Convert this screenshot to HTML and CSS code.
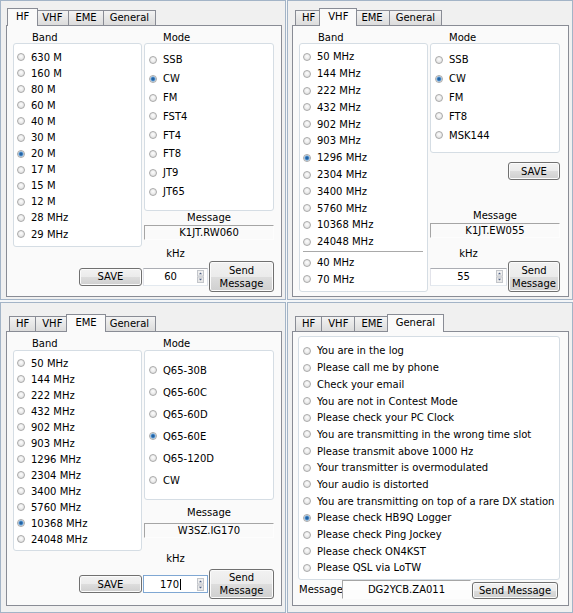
FILE: index.html
```html
<!DOCTYPE html>
<html lang="en">
<head>
    <meta charset="UTF-8">
    <title>Fast Messages</title>
    <link rel="stylesheet" href="styles.css">
</head>
<body>
    <div class="window">

        <!-- HF -->
        <section class="panel hf">
            <div class="tabs">
                <span class="tab active">HF</span><span class="tab">VHF</span><span class="tab">EME</span><span class="tab">General</span>
            </div>
            <div class="pane bandpane">
                <div class="head">Band</div>
                <div class="head">Mode</div>
                <div class="group band">
                    <div class="opt"><i class="radio"></i>630 M</div>
                    <div class="opt"><i class="radio"></i>160 M</div>
                    <div class="opt"><i class="radio"></i>80 M</div>
                    <div class="opt"><i class="radio"></i>60 M</div>
                    <div class="opt"><i class="radio"></i>40 M</div>
                    <div class="opt"><i class="radio"></i>30 M</div>
                    <div class="opt"><i class="radio on"></i>20 M</div>
                    <div class="opt"><i class="radio"></i>17 M</div>
                    <div class="opt"><i class="radio"></i>15 M</div>
                    <div class="opt"><i class="radio"></i>12 M</div>
                    <div class="opt"><i class="radio"></i>28 MHz</div>
                    <div class="opt"><i class="radio"></i>29 MHz</div>
                </div>
                <div class="side">
                    <div class="group mode">
                        <div class="opt"><i class="radio"></i>SSB</div>
                        <div class="opt"><i class="radio on"></i>CW</div>
                        <div class="opt"><i class="radio"></i>FM</div>
                        <div class="opt"><i class="radio"></i>FST4</div>
                        <div class="opt"><i class="radio"></i>FT4</div>
                        <div class="opt"><i class="radio"></i>FT8</div>
                        <div class="opt"><i class="radio"></i>JT9</div>
                        <div class="opt"><i class="radio"></i>JT65</div>
                    </div>
                    <div class="caption">Message</div>
                    <div class="field">K1JT.RW060</div>
                </div>
                <div class="khz-row"><span class="khz">kHz</span></div>
                <div class="actions">
                    <button class="btn save">SAVE</button>
                    <div class="spin">
                        <span class="value">60</span>
                        <svg class="arrows" width="7" height="13" viewBox="0 0 7 13">
                            <rect x="0.5" y="0.5" width="6" height="5.5" fill="#efefef" stroke="#c3c6cb"/>
                            <rect x="0.5" y="7" width="6" height="5.5" fill="#e8e8e8" stroke="#c3c6cb"/>
                            <path d="M2 4.2h3L3.5 2.4z" fill="#4b5e83"/>
                            <path d="M2 8.8h3L3.5 10.6z" fill="#4b5e83"/>
                        </svg>
                    </div>
                    <button class="btn send">Send<br>Message</button>
                </div>
            </div>
        </section>

        <!-- VHF -->
        <section class="panel right vhf">
            <div class="tabs">
                <span class="tab">HF</span><span class="tab active">VHF</span><span class="tab">EME</span><span class="tab">General</span>
            </div>
            <div class="pane bandpane">
                <div class="head">Band</div>
                <div class="head">Mode</div>
                <div class="group band">
                    <div class="opt"><i class="radio"></i>50 MHz</div>
                    <div class="opt"><i class="radio"></i>144 MHz</div>
                    <div class="opt"><i class="radio"></i>222 MHz</div>
                    <div class="opt"><i class="radio"></i>432 MHz</div>
                    <div class="opt"><i class="radio"></i>902 MHz</div>
                    <div class="opt"><i class="radio"></i>903 MHz</div>
                    <div class="opt"><i class="radio on"></i>1296 MHz</div>
                    <div class="opt"><i class="radio"></i>2304 MHz</div>
                    <div class="opt"><i class="radio"></i>3400 MHz</div>
                    <div class="opt"><i class="radio"></i>5760 MHz</div>
                    <div class="opt"><i class="radio"></i>10368 MHz</div>
                    <div class="opt"><i class="radio"></i>24048 MHz</div>
                    <div class="sep"></div>
                    <div class="opt"><i class="radio"></i>40 MHz</div>
                    <div class="opt"><i class="radio"></i>70 MHz</div>
                </div>
                <div class="side">
                    <div class="group mode">
                        <div class="opt"><i class="radio"></i>SSB</div>
                        <div class="opt"><i class="radio on"></i>CW</div>
                        <div class="opt"><i class="radio"></i>FM</div>
                        <div class="opt"><i class="radio"></i>FT8</div>
                        <div class="opt"><i class="radio"></i>MSK144</div>
                    </div>
                    <button class="btn save">SAVE</button>
                    <div class="caption">Message</div>
                    <div class="field">K1JT.EW055</div>
                    <div class="khz-row"><span class="khz">kHz</span></div>
                    <div class="actions">
                        <div class="spin">
                            <span class="value">55</span>
                            <svg class="arrows" width="7" height="13" viewBox="0 0 7 13">
                                <rect x="0.5" y="0.5" width="6" height="5.5" fill="#efefef" stroke="#c3c6cb"/>
                                <rect x="0.5" y="7" width="6" height="5.5" fill="#e8e8e8" stroke="#c3c6cb"/>
                                <path d="M2 4.2h3L3.5 2.4z" fill="#4b5e83"/>
                                <path d="M2 8.8h3L3.5 10.6z" fill="#4b5e83"/>
                            </svg>
                        </div>
                        <button class="btn send">Send<br>Message</button>
                    </div>
                </div>
            </div>
        </section>

        <!-- EME -->
        <section class="panel lower eme">
            <div class="tabs">
                <span class="tab">HF</span><span class="tab">VHF</span><span class="tab active">EME</span><span class="tab">General</span>
            </div>
            <div class="pane bandpane">
                <div class="head">Band</div>
                <div class="head">Mode</div>
                <div class="group band">
                    <div class="opt"><i class="radio"></i>50 MHz</div>
                    <div class="opt"><i class="radio"></i>144 MHz</div>
                    <div class="opt"><i class="radio"></i>222 MHz</div>
                    <div class="opt"><i class="radio"></i>432 MHz</div>
                    <div class="opt"><i class="radio"></i>902 MHz</div>
                    <div class="opt"><i class="radio"></i>903 MHz</div>
                    <div class="opt"><i class="radio"></i>1296 MHz</div>
                    <div class="opt"><i class="radio"></i>2304 MHz</div>
                    <div class="opt"><i class="radio"></i>3400 MHz</div>
                    <div class="opt"><i class="radio"></i>5760 MHz</div>
                    <div class="opt"><i class="radio on"></i>10368 MHz</div>
                    <div class="opt"><i class="radio"></i>24048 MHz</div>
                </div>
                <div class="side">
                    <div class="group mode">
                        <div class="opt"><i class="radio"></i>Q65-30B</div>
                        <div class="opt"><i class="radio"></i>Q65-60C</div>
                        <div class="opt"><i class="radio"></i>Q65-60D</div>
                        <div class="opt"><i class="radio on"></i>Q65-60E</div>
                        <div class="opt"><i class="radio"></i>Q65-120D</div>
                        <div class="opt"><i class="radio"></i>CW</div>
                    </div>
                    <div class="caption">Message</div>
                    <div class="field">W3SZ.IG170</div>
                </div>
                <div class="khz-row"><span class="khz">kHz</span></div>
                <div class="actions">
                    <button class="btn save">SAVE</button>
                    <div class="spin focus">
                        <span class="value">170<span class="caret"></span></span>
                        <svg class="arrows" width="7" height="13" viewBox="0 0 7 13">
                            <rect x="0.5" y="0.5" width="6" height="5.5" fill="#efefef" stroke="#c3c6cb"/>
                            <rect x="0.5" y="7" width="6" height="5.5" fill="#e8e8e8" stroke="#c3c6cb"/>
                            <path d="M2 4.2h3L3.5 2.4z" fill="#4b5e83"/>
                            <path d="M2 8.8h3L3.5 10.6z" fill="#4b5e83"/>
                        </svg>
                    </div>
                    <button class="btn send">Send<br>Message</button>
                </div>
            </div>
        </section>

        <!-- General -->
        <section class="panel right lower general">
            <div class="tabs">
                <span class="tab">HF</span><span class="tab">VHF</span><span class="tab">EME</span><span class="tab active">General</span>
            </div>
            <div class="pane genpane">
                <div class="group list">
                    <div class="opt"><i class="radio"></i>You are in the log</div>
                    <div class="opt"><i class="radio"></i>Please call me by phone</div>
                    <div class="opt"><i class="radio"></i>Check your email</div>
                    <div class="opt"><i class="radio"></i>You are not in Contest Mode</div>
                    <div class="opt"><i class="radio"></i>Please check your PC Clock</div>
                    <div class="opt"><i class="radio"></i>You are transmitting in the wrong time slot</div>
                    <div class="opt"><i class="radio"></i>Please transmit above 1000 Hz</div>
                    <div class="opt"><i class="radio"></i>Your transmitter is overmodulated</div>
                    <div class="opt"><i class="radio"></i>Your audio is distorted</div>
                    <div class="opt"><i class="radio"></i>You are transmitting on top of a rare DX station</div>
                    <div class="opt"><i class="radio on"></i>Please check HB9Q Logger</div>
                    <div class="opt"><i class="radio"></i>Please check Ping Jockey</div>
                    <div class="opt"><i class="radio"></i>Please check ON4KST</div>
                    <div class="opt"><i class="radio"></i>Please QSL via LoTW</div>
                </div>
                <div class="msgrow">
                    <span class="label">Message</span>
                    <div class="field">DG2YCB.ZA011</div>
                    <button class="btn send">Send Message</button>
                </div>
            </div>
        </section>

    </div>
</body>
</html>
```

FILE: styles.css
```css
* {
    box-sizing: border-box;
}

body {
    margin: 0;
    font-family: "DejaVu Sans", "Liberation Sans", sans-serif;
    font-size: 10px;
    color: #000;
    background: #f4f6f8;
}

.window {
    display: grid;
    grid-template-columns: 286px 286px;
    grid-template-rows: 300px 311px;
    column-gap: 1px;
    row-gap: 2px;
    width: 573px;
    height: 613px;
    background: #f4f6f8;
}

/* window frames */
.panel {
    display: flex;
    flex-direction: column;
    border: 1px solid #a3b4c7;
    background: #f0f0f0;
    padding: 7px 3px 2px 5px;
}

.panel.right {
    padding-left: 4px;
}

.panel.lower {
    padding-top: 11px;
    padding-bottom: 6px;
}

/* tab bar */
.tabs {
    display: flex;
    align-items: flex-end;
    height: 18px;
    margin: 0 0 -1px 3px;
    position: relative;
    z-index: 2;
}

.tab {
    height: 15px;
    margin-bottom: 1px;
    padding: 0 6px;
    border: 1px solid #898c95;
    border-bottom: none;
    background: linear-gradient(#f3f3f3, #e7e7e7 50%, #dcdcdc);
    line-height: 14px;
    white-space: nowrap;
}

.tab + .tab {
    margin-left: -1px;
}

.tab.active {
    height: 18px;
    margin: 0 -2px 0 -2px;
    padding: 1px 8px 0;
    background: #fafafa;
    position: relative;
    z-index: 1;
}

.tab + .tab.active {
    margin-left: -3px;
}

.pane {
    flex: 1;
    border: 1px solid #898c95;
    background: #fafafa;
    position: relative;
    z-index: 1;
}

/* band / mode pages */
.bandpane {
    display: grid;
    grid-template-columns: 129px 130px;
    column-gap: 2px;
    padding-left: 6px;
    align-content: start;
}

.head {
    height: 17px;
    line-height: 23px;
    padding-left: 19px;
}

.lower .head {
    height: 18px;
}

.group {
    background: #fff;
    border: 1px solid #d5dde4;
    border-radius: 3px;
}

.opt {
    display: flex;
    align-items: center;
    white-space: nowrap;
}

.radio {
    flex: none;
    width: 8px;
    height: 8px;
    margin-right: 6px;
    border: 1px solid #a9a9a9;
    border-radius: 50%;
    background: radial-gradient(circle at 50% 40%, #fdfdfd 0, #e4e4e4 70%, #d2d2d2 100%);
}

.radio.on {
    background: radial-gradient(circle, #174f88 0, #2f74b8 1.4px, #8dbbe6 2.4px, #e6e6e6 3px);
}

.band {
    padding-left: 3px;
}

.mode,
.list {
    padding-left: 4px;
}

.side {
    display: flex;
    flex-direction: column;
}

.caption {
    height: 14px;
    line-height: 14px;
    text-align: center;
}

.field {
    height: 15px;
    line-height: 13px;
    text-align: center;
    border: 1px solid;
    border-color: #a5a5a5 #fdfdfd #fdfdfd #a5a5a5;
}

.khz-row {
    grid-column: 1 / -1;
    display: flex;
    justify-content: flex-end;
    height: 14px;
    line-height: 14px;
}

.khz {
    width: 65px;
    margin-right: 66px;
    text-align: center;
}

.lower .khz-row {
    height: 18px;
    line-height: 16px;
}

.actions {
    grid-column: 1 / -1;
    display: flex;
    justify-content: flex-end;
    align-items: center;
    gap: 1px;
    height: 31px;
}

.lower .actions {
    height: 30px;
}

/* push buttons */
.btn {
    font: inherit;
    color: #000;
    padding: 0;
    border: 1px solid #707070;
    border-radius: 3px;
    background: linear-gradient(#f2f2f2, #ebebeb 50%, #dddddd 51%, #cfcfcf);
    box-shadow: inset 0 0 0 1px #fbfbfb;
    line-height: 13px;
}

.save {
    width: 63px;
    height: 18px;
}

.send {
    width: 65px;
    height: 31px;
}

.lower .send {
    height: 30px;
}

/* spin box */
.spin {
    display: flex;
    align-items: center;
    width: 65px;
    height: 18px;
    background: #fff;
    border: 1px solid;
    border-color: #abadb3 #dbdfe6 #e3e9ef #e2e3ea;
}

.spin.focus {
    border-color: #7fa7d3;
}

.spin .value {
    flex: 1;
    text-align: center;
}

.arrows {
    flex: none;
    margin-right: 3px;
}

.caret {
    display: inline-block;
    width: 1px;
    height: 11px;
    margin-left: 1px;
    background: #000;
    vertical-align: -2px;
}

/* per page sizes */
.hf .band {
    height: 204px;
    padding-top: 5px;
}

.hf .band .opt {
    height: 16.1px;
}

.hf .mode {
    height: 168px;
    padding-top: 6.6px;
}

.hf .mode .opt {
    height: 18.8px;
}

.vhf .band {
    height: 249px;
    padding-top: 4.6px;
}

.vhf .band .opt {
    height: 16.8px;
}

.sep {
    height: 1px;
    margin: 1px 4px 2px 0;
    background: #a9a9a9;
}

.vhf .mode {
    height: 110px;
    padding-top: 6.6px;
}

.vhf .mode .opt {
    height: 18.8px;
}

.vhf .save {
    align-self: flex-end;
    width: 52px;
    margin-top: 9px;
}

.vhf .caption {
    margin-top: 29px;
}

.vhf .khz-row {
    justify-content: flex-start;
    margin-top: 9px;
}

.vhf .khz {
    width: 77px;
    margin-right: 0;
}

.vhf .actions {
    justify-content: flex-start;
}

.vhf .spin {
    width: 77px;
}

.vhf .send {
    width: 52px;
}

.eme .band {
    height: 201px;
    padding-top: 4px;
}

.eme .band .opt {
    height: 16px;
}

.eme .mode {
    height: 150px;
    padding-top: 8px;
}

.eme .mode .opt {
    height: 22px;
}

.eme .caption {
    margin-top: 6px;
}

.eme .field {
    margin-top: 3px;
}

/* general page */
.genpane {
    display: flex;
    flex-direction: column;
    padding: 4px 8px 6px 5px;
}

.list {
    height: 244px;
    padding-top: 5.6px;
}

.list .opt {
    height: 16.7px;
}

.msgrow {
    display: flex;
    align-items: flex-end;
    height: 19px;
}

.msgrow .label {
    width: 44px;
    padding-left: 1px;
    line-height: 19px;
    white-space: nowrap;
}

.msgrow .field {
    width: 129px;
    height: 19px;
    line-height: 17px;
    background: #fdfdfd;
}

.msgrow .send {
    width: 86px;
    height: 17px;
    margin-left: 1px;
}
```
